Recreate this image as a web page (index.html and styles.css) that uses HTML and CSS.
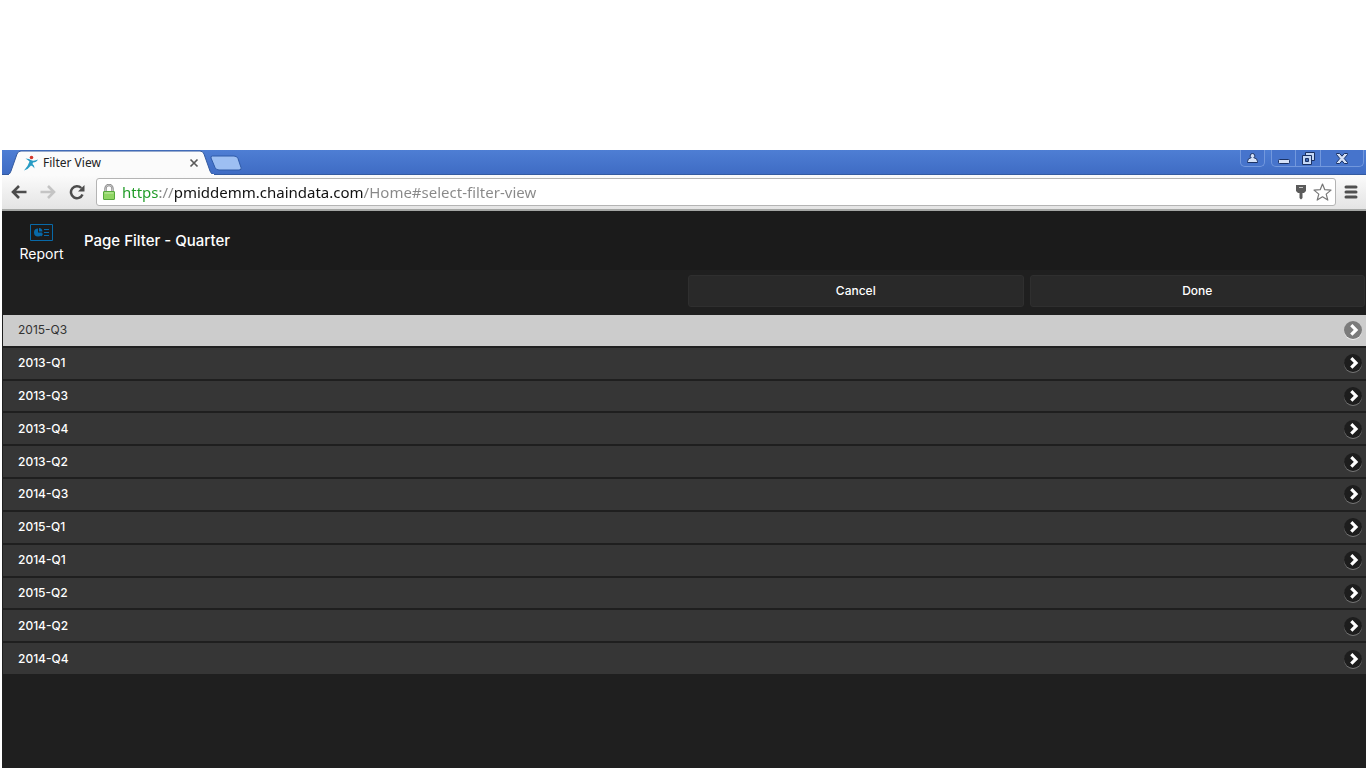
FILE: index.html
```html
<!DOCTYPE html>
<html lang="en">
<head>
<meta charset="utf-8">
<title>Filter View</title>
<link rel="stylesheet" href="styles.css">
</head>
<body>
<svg class="defs" aria-hidden="true">
  <symbol id="chevron" viewBox="0 0 20 20">
    <circle class="chevron-ring" cx="10" cy="11" r="9"/>
    <circle class="chevron-disc" cx="10" cy="10" r="9"/>
    <path d="M8.300 5.200 13 9.900l-4.700 4.700" fill="none" stroke="#fff" stroke-width="3.200"/>
  </symbol>
</svg>
<div class="browser">
  <div class="tabstrip">
    <div class="tab">
      <svg class="tab-shape" viewBox="0 0 206 25" preserveAspectRatio="none" aria-hidden="true">
        <path d="M0 25Q2 24 3 21L9 4Q10 1 13 1H192Q195 1 196 4L202 21Q203 24 206 25Z" fill="#fbfbfb" stroke="#345a9f"/>
        <path d="M1 25H206" stroke="#fbfbfb" stroke-width="2"/>
      </svg>
      <svg class="favicon" viewBox="0 0 16 16" aria-hidden="true">
        <path d="M2.500 3.500Q6 3.500 9 5.500q3 .5 6-1-1.500 3-5 3L9.500 9q2 1 2 4.500Q10 11 8 10.500 5.500 14 1 15.500q4-4 5.500-9Q5 4.800 2.500 3.500Z" fill="#269bc4"/>
        <circle cx="8.500" cy="2.500" r="1.800" fill="#d3382c"/>
      </svg>
      <span class="tab-title">Filter View</span>
      <button class="icon-button tab-close" aria-label="Close tab"><svg width="10" height="10" viewBox="0 0 10 10"><path d="m1.500 1.500 7 7m0-7-7 7" stroke="#5a5a5a" stroke-width="1.700"/></svg></button>
    </div>
    <button class="icon-button new-tab" aria-label="New tab"><svg width="32" height="16" viewBox="0 0 32 16"><path d="M2.500 1H24q3 0 4 2.500l3 9q1 2.500-2 2.500H9q-3 0-4-2.500L1 3Q.5 1 2.500 1Z" fill="#9dbff2" stroke="#2f5aa8"/></svg></button>
    <div class="window-controls">
      <button class="window-button user" aria-label="User"><svg width="11" height="11" viewBox="0 0 11 11"><path d="M5.500.5a2.300 2.300 0 0 1 1.300 4.200q3.700.3 3.700 3.800v1H.5v-1q0-3.500 3.700-3.800A2.300 2.300 0 0 1 5.500.5Z" fill="#d4e1f7" stroke="#1b3264"/></svg></button>
      <div class="window-group">
        <button class="window-button minimize" aria-label="Minimize"><svg width="12" height="12" viewBox="0 0 12 12"><rect x=".5" y="7.500" width="11" height="4" rx="1" fill="#d4e1f7" stroke="#1b3264"/></svg></button>
        <button class="window-button restore" aria-label="Restore"><svg width="13" height="13" viewBox="0 0 13 13" fill="#c4d7f5" stroke="#1b3264"><path d="M3.500.5h9v8h-9z"/><path d="M.5 3.500h9v9h-9z"/><path d="M3.500 6.500h3v3h-3z" fill="#3d68b5"/></svg></button>
        <button class="window-button close" aria-label="Close"><svg width="12" height="11" viewBox="0 0 12 11"><path d="M.5.500h3.200L6 3.200 8.300.5h3.200v1L8.200 5.500l3.300 4v1H8.300L6 7.800 3.700 10.500H.5v-1l3.300-4L.5 1.500Z" fill="#d4e1f7" stroke="#1b3264"/></svg></button>
      </div>
    </div>
  </div>
  <div class="toolbar">
    <button class="icon-button" aria-label="Back"><svg width="16" height="14" viewBox="0 0 16 14" fill="none" stroke="#4c4c4c" stroke-width="2.600"><path d="M15.500 7H3M8 1 2 7l6 6"/></svg></button>
    <button class="icon-button forward" aria-label="Forward"><svg width="16" height="14" viewBox="0 0 16 14" fill="none" stroke="#c4c4c4" stroke-width="2.600"><path d="M.5 7H13M8 1l6 6-6 6"/></svg></button>
    <button class="icon-button" aria-label="Reload"><svg width="16" height="16" viewBox="0 0 16 16"><path d="M13.500 10.500a6 6 0 1 1-1.200-6.500" fill="none" stroke="#4c4c4c" stroke-width="2.500"/><path d="M15.500 1v6.500H9Z" fill="#4c4c4c"/></svg></button>
    <div class="omnibox">
      <svg class="lock" width="12" height="16" viewBox="0 0 12 16" aria-hidden="true"><path d="M2.500 8V4.500a3.500 3.500 0 0 1 7 0V8" fill="none" stroke="#888" stroke-width="2.400"/><path d="M2.500 8V4.500a3.500 3.500 0 0 1 7 0V8" fill="none" stroke="#ddd" stroke-width=".7"/><rect x=".5" y="7.500" width="11" height="8" rx=".5" fill="#8fd563" stroke="#56a83c"/><path d="M1.500 9h9" stroke="#c3edaa"/></svg>
      <input class="url" type="text" aria-label="Address" value="https://pmiddemm.chaindata.com/Home#select-filter-view">
      <button class="icon-button" aria-label="Saved passwords"><svg width="10" height="15" viewBox="0 0 10 15"><path d="M0 0h10v6L8 8H6.500v5L5 14.500 3.500 13V8H2L0 6Z" fill="#5b5b5b"/><path d="M3 2.500h4" stroke="#c5c5c5"/></svg></button>
      <button class="icon-button" aria-label="Bookmark"><svg width="19" height="18" viewBox="0 0 19 18"><path d="m9.500 1 2.300 5.700 6.200.4-4.800 4 1.600 6-5.300-3.300-5.300 3.300 1.600-6-4.800-4 6.200-.4Z" fill="#fff" stroke="#777" stroke-width="1.200" stroke-linejoin="round"/></svg></button>
    </div>
    <button class="icon-button" aria-label="Menu"><svg width="14" height="14" viewBox="0 0 14 14"><path d="M2 2h10M2 7h10M2 12h10" stroke="#505050" stroke-width="3" stroke-linecap="round"/></svg></button>
  </div>
  <div class="app">
    <header class="app-header">
      <a class="report" href="#report">
        <svg width="23" height="17" viewBox="0 0 23 17" aria-hidden="true"><path d="M.5.500h22v16H.5z" fill="none" stroke="#0869a8"/><path d="M8 4.500v4h4A4 4 0 1 1 8 4.500Z" fill="#0869a8"/><path d="M9 4a4 4 0 0 1 3.500 3.500H9ZM9.500 9.500H13a4 4 0 0 1-2 3Z" fill="#0869a8"/><path d="M14 5.500h5M14 8.500h5M14 11.500h5" stroke="#0869a8"/></svg>
        <span>Report</span>
      </a>
      <h1 class="title">Page Filter - Quarter</h1>
    </header>
    <div class="actions">
      <button class="action">Cancel</button>
      <button class="action">Done</button>
    </div>
    <ul class="quarters">
      <li><a class="quarter selected" href="#2015-Q3">2015-Q3<svg class="chevron" aria-hidden="true"><use href="#chevron"/></svg></a></li>
      <li><a class="quarter" href="#2013-Q1">2013-Q1<svg class="chevron" aria-hidden="true"><use href="#chevron"/></svg></a></li>
      <li><a class="quarter" href="#2013-Q3">2013-Q3<svg class="chevron" aria-hidden="true"><use href="#chevron"/></svg></a></li>
      <li><a class="quarter" href="#2013-Q4">2013-Q4<svg class="chevron" aria-hidden="true"><use href="#chevron"/></svg></a></li>
      <li><a class="quarter" href="#2013-Q2">2013-Q2<svg class="chevron" aria-hidden="true"><use href="#chevron"/></svg></a></li>
      <li><a class="quarter" href="#2014-Q3">2014-Q3<svg class="chevron" aria-hidden="true"><use href="#chevron"/></svg></a></li>
      <li><a class="quarter" href="#2015-Q1">2015-Q1<svg class="chevron" aria-hidden="true"><use href="#chevron"/></svg></a></li>
      <li><a class="quarter" href="#2014-Q1">2014-Q1<svg class="chevron" aria-hidden="true"><use href="#chevron"/></svg></a></li>
      <li><a class="quarter" href="#2015-Q2">2015-Q2<svg class="chevron" aria-hidden="true"><use href="#chevron"/></svg></a></li>
      <li><a class="quarter" href="#2014-Q2">2014-Q2<svg class="chevron" aria-hidden="true"><use href="#chevron"/></svg></a></li>
      <li><a class="quarter" href="#2014-Q4">2014-Q4<svg class="chevron" aria-hidden="true"><use href="#chevron"/></svg></a></li>
    </ul>
  </div>
</div>
</body>
</html>
```
FILE: styles.css
```css
* { box-sizing: border-box; }

body {
  margin: 0;
  min-height: 100vh;
  display: flex;
  flex-direction: column;
  padding: 150px 0 0 2px;
  background: #fff;
  font-family: Inter, "Liberation Sans", sans-serif;
  font-size: 12px;
}

button { font: inherit; }
svg { display: block; flex: none; }
.defs { position: absolute; width: 0; height: 0; }

.browser { flex: 1; display: flex; flex-direction: column; }

.icon-button { display: flex; padding: 0; border: 0; background: none; }

/* Tab strip */
.tabstrip {
  display: flex;
  align-items: flex-start;
  height: 25px;
  padding-left: 6px;
  background: linear-gradient(#4e7ed4, #3f6cc4);
  border-bottom: 1px solid #345a9f;
}

.tab {
  position: relative;
  display: flex;
  align-items: center;
  width: 206px;
  height: 25px;
  padding: 0 15px;
  font-family: "Noto Sans", sans-serif;
  color: #222;
}

.tab-shape { position: absolute; inset: 0; width: 100%; height: 100%; }
.favicon, .tab-title, .tab-close { position: relative; }
.favicon { width: 16px; height: 16px; }
.tab-title { flex: 1; padding-left: 4px; }
.new-tab { margin: 5px 0 0 -4px; }

.window-controls { display: flex; gap: 6px; margin-left: auto; padding-right: 2px; }
.window-group { display: flex; }

.window-button {
  display: flex;
  align-items: center;
  justify-content: center;
  height: 17px;
  width: 25px;
  padding: 0;
  border: 1px solid #7298dd;
  border-top: 0;
  background: #4674cc;
}

.user { border-radius: 0 0 5px 5px; }
.minimize { border-radius: 0 0 0 5px; }
.restore { border-left: 0; }
.close { width: 43px; border-left: 0; border-radius: 0 0 5px 0; }

/* Toolbar */
.toolbar {
  display: flex;
  align-items: center;
  gap: 13px;
  height: 36px;
  padding: 0 8px 0 9px;
  background: linear-gradient(#fbfbfb, #e4e4e4);
  border-bottom: 2px solid #a5a7a5;
}

.omnibox {
  flex: 1;
  display: flex;
  align-items: center;
  gap: 7px;
  height: 28px;
  margin-left: -2px;
  margin-right: -5px;
  padding: 0 3px 0 6px;
  background: #fff;
  border: 1px solid #b4b4b4;
  border-radius: 3px;
}

.url {
  flex: 1;
  min-width: 0;
  padding: 0;
  border: 0;
  outline: 0;
  font-family: "Noto Sans", sans-serif;
  font-size: 15px;
  line-height: 24px;
  color: transparent;
  background: linear-gradient(90deg, #1d9a24 38px, #888 38px 52px, #111 52px 241px, #888 241px);
  background-clip: text;
}

/* Application */
.app { flex: 1; background: #1f1f1f; color: #fff; }

.app-header {
  display: flex;
  align-items: center;
  gap: 20px;
  height: 59px;
  padding-left: 17px;
  background: #1b1b1b;
}

.report {
  display: flex;
  flex-direction: column;
  align-items: center;
  gap: 4px;
  width: 45px;
  padding-top: 6px;
  color: #fff;
  font-size: 14px;
  line-height: 18px;
  text-decoration: none;
}

.title { margin: 0; font-size: 15px; font-weight: 500; }

.actions {
  display: grid;
  grid-template-columns: 1fr 1fr;
  gap: 6px;
  margin-left: 50%;
  padding: 5px 1px 8px 4px;
}

.action {
  height: 32px;
  padding: 0 0 1px;
  border: 1px solid #2f2f2f;
  border-radius: 3px;
  background: #292929;
  color: #fff;
  font-weight: 500;
}

.quarters {
  display: grid;
  grid-auto-rows: 1fr;
  gap: 2px;
  min-height: 359px;
  margin: 0;
  padding: 0 0 0 1px;
  list-style: none;
}

.quarter {
  --disc: #1d1d1d;
  --ring: #777;
  display: flex;
  align-items: center;
  justify-content: space-between;
  height: 100%;
  padding: 0 3px 0 15px;
  background: #363636;
  color: #fff;
  font-weight: 500;
  line-height: 16px;
  text-decoration: none;
}

.chevron { width: 20px; height: 20px; }
.chevron-disc { fill: var(--disc); }
.chevron-ring { fill: var(--ring); }

.selected {
  --disc: #7b7b7b;
  --ring: #eee;
  background: #ccc;
  color: #333;
  font-weight: 400;
}
```
